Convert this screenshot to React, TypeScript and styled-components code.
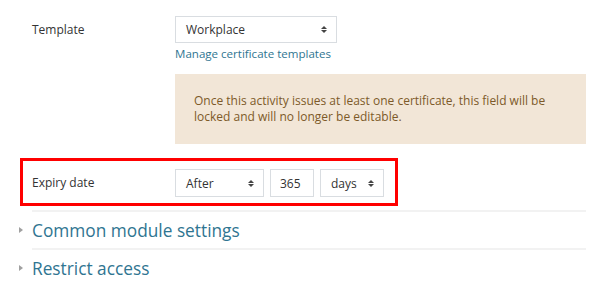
import React from 'react'
import styled, { createGlobalStyle } from 'styled-components'

const GlobalStyle = createGlobalStyle`
  html, body {
    margin: 0;
    padding: 0;
    background: #ffffff;
  }
  body {
    font-family: 'Open Sans', 'Liberation Sans', sans-serif;
    font-size: 12px;
    color: #333333;
  }
`

const Page = styled.div`
  width: 600px;
  height: 283px;
  overflow: hidden;
  padding: 16px 14px 0 32px;
  box-sizing: border-box;
`

const Row = styled.div`
  display: flex;
  align-items: flex-start;
`

const Label = styled.div`
  width: 143px;
  flex: none;
  line-height: 27px;
  font-size: 12px;
  color: #333333;
`

const Controls = styled.div`
  display: flex;
  flex-direction: column;
  align-items: flex-start;
  flex: 1;
`

const Inline = styled.div`
  display: flex;
  gap: 6px;
  align-items: center;
`

const Select = styled.div<{ $w: number; $h?: number }>`
  width: ${(p) => p.$w}px;
  height: ${(p) => p.$h ?? 27}px;
  box-sizing: border-box;
  border: 1px solid #d9dde1;
  background: #fff;
  display: flex;
  align-items: center;
  justify-content: space-between;
  padding: 0 9px 0 10px;
  font-size: 12px;
  color: #333333;
`

const Caret = styled.span`
  display: flex;
  flex-direction: column;
  gap: 1px;
  &::before,
  &::after {
    content: '';
    border-left: 3px solid transparent;
    border-right: 3px solid transparent;
  }
  &::before {
    border-bottom: 3px solid #444;
  }
  &::after {
    border-top: 3px solid #444;
  }
`

const TextInput = styled.div`
  width: 44px;
  height: 28px;
  box-sizing: border-box;
  border: 1px solid #d9dde1;
  display: flex;
  align-items: center;
  padding-left: 9px;
  font-size: 12px;
`

const Link = styled.a`
  color: #2f7591;
  text-decoration: none;
  font-size: 11.55px;
  margin-top: 3px;
  line-height: 16px;
`

const Alert = styled.div`
  margin-top: 12px;
  width: 411px;
  box-sizing: border-box;
  background: #f2e6d7;
  color: #7d5a29;
  padding: 19px;
  font-size: 12px;
  line-height: 16px;
`

const Highlight = styled.div`
  margin: 14px 0 0 -12px;
  width: 378px;
  height: 48px;
  box-sizing: border-box;
  border: 3px solid #ff0000;
  padding: 8px 0 0 9px;
  display: flex;
  align-items: flex-start;
`

const Divider = styled.div`
  height: 2px;
  background: #f2f2f2;
`

const Section = styled.div`
  position: relative;
  display: flex;
  align-items: center;
  height: 36px;
  font-size: 17.3px;
  color: #2f7591;
  &::before {
    content: '';
    position: absolute;
    left: -13px;
    top: 50%;
    margin-top: -3.5px;
    border-top: 3.5px solid transparent;
    border-bottom: 3.5px solid transparent;
    border-left: 4px solid #a0a0a0;
  }
`

export default function App() {
  return (
    <>
      <GlobalStyle />
      <Page>
        <Row>
          <Label>Template</Label>
          <Controls>
            <Select $w={162}>
              Workplace
              <Caret />
            </Select>
            <Link href="#">Manage certificate templates</Link>
            <Alert>
              Once this activity issues at least one certificate, this field will be
              locked and will no longer be editable.
            </Alert>
          </Controls>
        </Row>
        <Highlight>
          <Label>Expiry date</Label>
          <Inline>
            <Select $w={89} $h={28}>
              After
              <Caret />
            </Select>
            <TextInput>365</TextInput>
            <Select $w={64} $h={28}>
              days
              <Caret />
            </Select>
          </Inline>
        </Highlight>
        <Divider style={{ marginTop: 4 }} />
        <Section>Common module settings</Section>
        <Divider />
        <Section>Restrict access</Section>
      </Page>
    </>
  )
}
